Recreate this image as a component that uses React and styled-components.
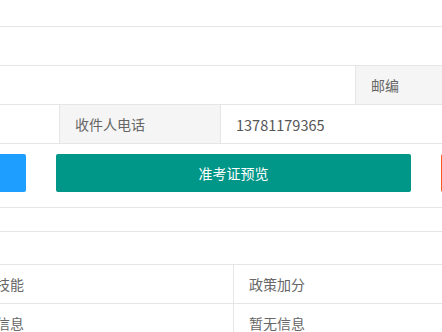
import React from "react";
import styled, { createGlobalStyle } from "styled-components";

const Global = createGlobalStyle`
  html, body { margin: 0; padding: 0; background: #fff; overflow: hidden; }
  body { font-family: "Noto Sans CJK SC", "Noto Sans", sans-serif; font-size: 14px; color: #666; }
  * { box-sizing: border-box; }
`;

const Viewport = styled.div`
  width: 442px;
  height: 332px;
  overflow: hidden;
`;

/* the visible window is scrolled 400px into a wider page */
const Canvas = styled.div`
  width: 1000px;
  margin-left: -400px;
`;

const Row = styled.div`
  display: flex;
  height: ${(p) => p.$h || 39}px;
  border-bottom: 1px solid #e6e6e6;
`;

const Spacer = styled.div`
  width: ${(p) => p.$w}px;
  flex: none;
`;

const Label = styled.div`
  flex: none;
  width: ${(p) => (p.$w ? `${p.$w}px` : "auto")};
  ${(p) => (p.$grow ? "flex: 1;" : "")}
  display: flex;
  align-items: center;
  padding: 0 15px;
  background: #f5f5f5;
  border-left: 1px solid #e6e6e6;
  ${(p) => (p.$right ? "border-right: 1px solid #e6e6e6;" : "")}
  color: #666;
  white-space: nowrap;
`;

const Value = styled.div`
  flex: 1;
  display: flex;
  align-items: center;
  padding: 0 15px;
  color: #555;
  font-size: 14.5px;
  white-space: nowrap;
`;

const ButtonArea = styled.div`
  display: flex;
  gap: 30px;
  padding: 10px 0 0 71px;
  height: 64px;
  border-bottom: 1px solid #e6e6e6;
`;

const Button = styled.button`
  flex: none;
  width: 355px;
  height: 38px;
  border: none;
  border-radius: 2px;
  background: ${(p) => p.$bg};
  color: #fff;
  font-family: inherit;
  font-size: 14px;
  cursor: pointer;
`;

const Grid = styled.div`
  display: grid;
  grid-template-columns: 281px 281px;
  margin-left: 353px;
`;

const Cell = styled.div`
  height: 39px;
  display: flex;
  align-items: center;
  padding: 0 15px;
  border-bottom: 1px solid #e6e6e6;
  ${(p) => (p.$first ? "border-right: 1px solid #e6e6e6;" : "")}
  color: #666;
  white-space: nowrap;
`;

export default function App() {
  return (
    <Viewport>
      <Global />
      <Canvas>
        <Row $h={27} />
        <Row />
        <Row>
          <Spacer $w={755} />
          <Label $grow>邮编</Label>
        </Row>
        <Row>
          <Spacer $w={459} />
          <Label $w={162} $right>收件人电话</Label>
          <Value>13781179365</Value>
        </Row>
        <ButtonArea>
          <Button $bg="#1E9FFF">打印准考证</Button>
          <Button $bg="#009688">准考证预览</Button>
          <Button $bg="#FF5722">返回</Button>
        </ButtonArea>
        <Row $h={24} />
        <Row $h={33} />
        <Grid>
          <Cell $first>职业技能</Cell>
          <Cell>政策加分</Cell>
          <Cell $first>暂无信息</Cell>
          <Cell>暂无信息</Cell>
        </Grid>
      </Canvas>
    </Viewport>
  );
}
